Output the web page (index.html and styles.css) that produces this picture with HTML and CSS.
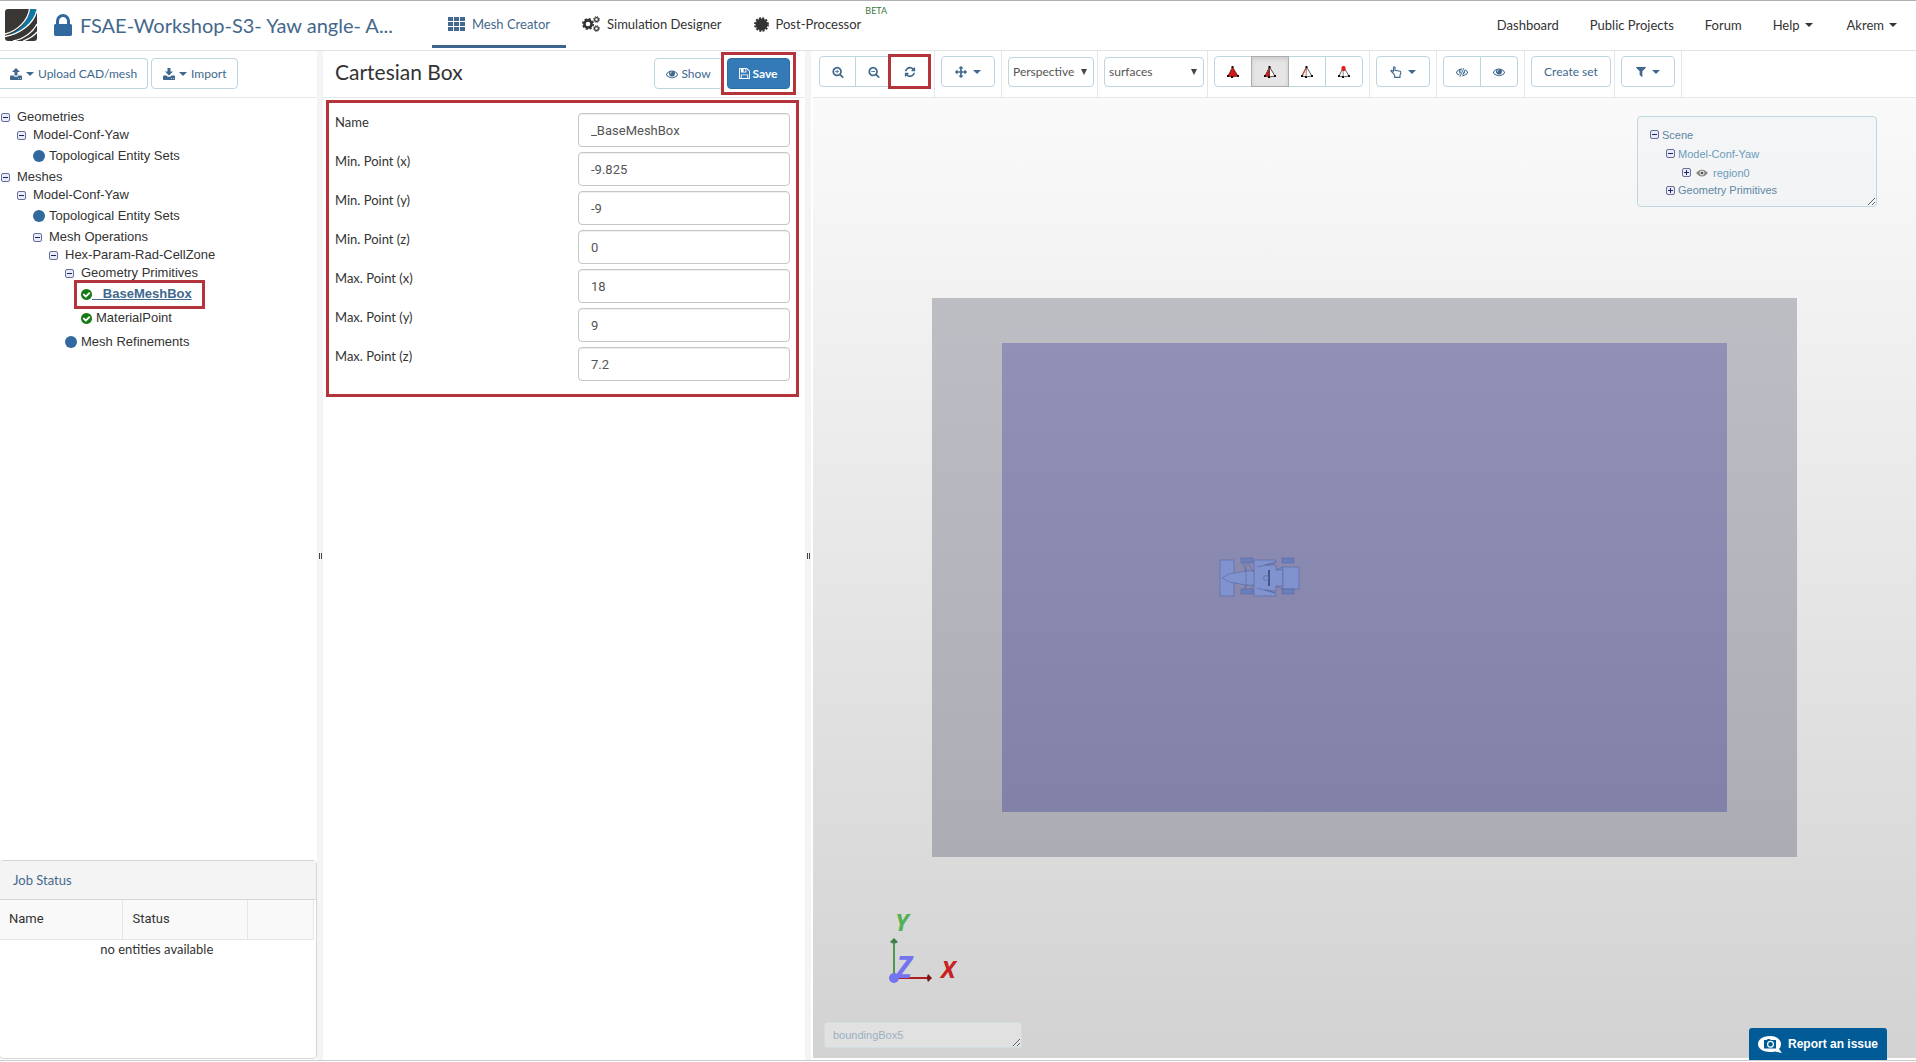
FILE: index.html
```html
<!DOCTYPE html>
<html lang="en">
<head>
<meta charset="utf-8">
<title>Mesh Creator</title>
<link rel="stylesheet" href="styles.css">
</head>
<body>
<svg class="defs" aria-hidden="true">
  <symbol id="i-lock" viewBox="320 128 1152 1408"><path d="M640 768h512v-192q0-106-75-181t-181-75-181 75-75 181v192zm832 96v576q0 40-28 68t-68 28h-960q-40 0-68-28t-28-68v-576q0-40 28-68t68-28h32v-192q0-184 132-316t316-132 316 132 132 316v192h32q40 0 68 28t28 68z"/></symbol>
  <symbol id="i-eye" viewBox="0 0 1792 1792"><path d="M1664 960q-152-236-381-353 61 104 61 225 0 185-131.5 316.5t-316.5 131.5-316.5-131.5-131.5-316.5q0-121 61-225-229 117-381 353 133 205 333.5 326.5t434.5 121.5 434.5-121.5 333.5-326.5zm-720-384q0-20-14-34t-34-14q-125 0-214.5 89.5t-89.5 214.5q0 20 14 34t34 14 34-14 14-34q0-86 61-147t147-61q20 0 34-14t14-34zm848 384q0 34-20 69-140 230-376.5 368.5t-499.5 138.5-499.5-139-376.5-368q-20-35-20-69t20-69q140-229 376.5-368t499.5-139 499.5 139 376.5 368q20 35 20 69z"/></symbol>
  <symbol id="i-zoom" viewBox="0 0 1792 1792"><path d="M1216 832q0-185-131.5-316.5t-316.5-131.5-316.5 131.5-131.5 316.5 131.5 316.5 316.5 131.5 316.5-131.5 131.5-316.5zm512 832q0 53-37.5 90.5t-90.5 37.5q-54 0-90-38l-343-342q-179 124-399 124-143 0-273.5-55.5t-225-150-150-225-55.5-273.5 55.5-273.5 150-225 225-150 273.5-55.5 273.5 55.5 225 150 150 225 55.5 273.5q0 220-124 399l343 343q37 37 37 90z"/></symbol>
  <symbol id="i-refresh" viewBox="0 0 1792 1792"><path d="M1639 1056q0 5-1 7-64 268-268 434.5t-478 166.5q-146 0-282.5-55t-243.5-157l-129 129q-19 19-45 19t-45-19-19-45v-448q0-26 19-45t45-19h448q26 0 45 19t19 45-19 45l-137 137q71 66 161 102t187 36q134 0 250-65t186-179q11-17 53-117 8-23 30-23h192q13 0 22.5 9.5t9.5 22.5zm25-800v448q0 26-19 45t-45 19h-448q-26 0-45-19t-19-45 19-45l138-138q-148-137-349-137-134 0-250 65t-186 179q-11 17-53 117-8 23-30 23h-199q-13 0-22.5-9.5t-9.5-22.5v-7q65-268 270-434.5t480-166.5q146 0 284 55.5t245 156.5l130-129q19-19 45-19t45 19 19 45z"/></symbol>
  <symbol id="i-move" viewBox="0 0 1792 1792"><path d="M1792 896q0 26-19 45l-256 256q-19 19-45 19t-45-19-19-45v-128h-384v384h128q26 0 45 19t19 45-19 45l-256 256q-19 19-45 19t-45-19l-256-256q-19-19-19-45t19-45 45-19h128v-384h-384v128q0 26-19 45t-45 19-45-19l-256-256q-19-19-19-45t19-45l256-256q19-19 45-19t45 19 19 45v128h384v-384h-128q-26 0-45-19t-19-45 19-45l256-256q19-19 45-19t45 19l256 256q19 19 19 45t-19 45-45 19h-128v384h384v-128q0-26 19-45t45-19 45 19l256 256q19 19 19 45z"/></symbol>
  <symbol id="i-filter" viewBox="192 256 1408 1408"><path d="M1595 295q17 41-14 70l-493 493v742q0 42-39 59-13 5-25 5-27 0-45-19l-256-256q-19-19-19-45v-486l-493-493q-31-29-14-70 17-39 59-39h1280q42 0 59 39z"/></symbol>
  <symbol id="i-check" viewBox="128 128 1536 1536"><path d="M1412 734q0-28-18-46l-91-90q-19-19-45-19t-45 19l-408 407-226-226q-19-19-45-19t-45 19l-91 90q-18 18-18 46 0 27 18 45l362 362q19 19 45 19 27 0 46-19l543-543q18-18 18-45zm252 162q0 209-103 385.5t-279.5 279.5-385.5 103-385.5-103-279.5-279.5-103-385.5 103-385.5 279.5-279.5 385.5-103 385.5 103 279.5 279.5 103 385.5z"/></symbol>
  <symbol id="i-floppy" viewBox="128 128 1536 1536"><path d="M512 1536h768v-384h-768v384zm896 0h128v-896q0-14-10-38.5t-20-34.5l-281-281q-10-10-34-20t-39-10v416q0 40-28 68t-68 28h-576q-40 0-68-28t-28-68v-416h-128v1280h128v-416q0-40 28-68t68-28h832q40 0 68 28t28 68v416zm-384-928v-320q0-13-9.5-22.5t-22.5-9.5h-192q-13 0-22.5 9.5t-9.5 22.5v320q0 13 9.5 22.5t22.5 9.5h192q13 0 22.5-9.5t9.5-22.5zm640 32v928q0 40-28 68t-68 28h-1344q-40 0-68-28t-28-68v-1344q0-40 28-68t68-28h928q40 0 88 20t76 48l280 280q28 28 48 76t20 88z"/></symbol>
  <symbol id="i-tray" viewBox="0 0 12 12"><path d="M.6 7.6H3.6L4.6 8.8H7.4L8.4 7.600H11.400L12 8.200V11.400L11.400 12H.6L0 11.400V8.200ZM8.300 10H9.100V10.800H8.300ZM10 10H10.800V10.800H10Z" fill-rule="evenodd"/></symbol>
  <symbol id="i-caret" viewBox="0 0 8 4"><path d="M0 0H8L4 4Z"/></symbol>
  <symbol id="i-minus" viewBox="0 0 9 9"><rect x=".5" y=".5" width="8" height="8" rx="1.500" fill="#e6ebf8" stroke="#6a6c99"/><path d="M2 4H7V5H2Z" fill="#222266"/></symbol>
  <symbol id="i-plus" viewBox="0 0 9 9"><rect x=".5" y=".5" width="8" height="8" rx="1.500" fill="#e6ebf8" stroke="#6a6c99"/><path d="M2 4H4V2H5V4H7V5H5V7H4V5H2Z" fill="#222266"/></symbol>
</svg>

<header class="topbar">
  <div class="brand">
    <svg class="logo" viewBox="0 0 32 32"><clipPath id="logo-clip"><rect width="32" height="32" rx="3"/></clipPath><g clip-path="url(#logo-clip)"><rect width="32" height="32" fill="#3a3633"/><path d="M0 27C14 24 23 13 25 0H32C30 14 17 25 0 27Z" fill="#0f76a8"/><g fill="none" stroke="#fff" stroke-width="1.300"><path d="M0 25C12 22 23 12 24.500 0"/><path d="M0 27.500C15 25 29 15 32 1"/><path d="M8 32C19 30 28 23 32 15"/><path d="M18 32C24 30 29 27 32 23"/></g></g></svg>
    <svg class="lock"><use href="#i-lock"/></svg>
    <a class="project" href="#">FSAE-Workshop-S3- Yaw angle- A...</a>
  </div>
  <nav class="tabs">
    <a class="tab active" href="#"><svg width="17" height="14" viewBox="0 0 17 14"><path d="M0 0h5v4H0zM6 0h5v4H6zM12 0h5v4h-5zM0 5h5v4H0zM6 5h5v4H6zM12 5h5v4h-5zM0 10h5v4H0zM6 10h5v4H6zM12 10h5v4h-5z"/></svg>Mesh Creator</a>
    <a class="tab" href="#"><svg width="18" height="16" viewBox="0 0 18 16"><g fill="none" stroke="currentColor"><circle cx="6" cy="8" r="3.600" stroke-width="2.600"/><circle cx="6" cy="8" r="5.200" stroke-width="1.600" stroke-dasharray="2.200 1.884"/><circle cx="14.500" cy="3.500" r="1.900" stroke-width="1.200"/><circle cx="14.500" cy="3.500" r="2.900" stroke-width="1" stroke-dasharray="1.200 1.077"/><circle cx="14.500" cy="12.500" r="1.900" stroke-width="1.200"/><circle cx="14.500" cy="12.500" r="2.900" stroke-width="1" stroke-dasharray="1.200 1.077"/></g></svg>Simulation Designer</a>
    <a class="tab" href="#"><svg width="15" height="15" viewBox="0 0 15 15"><circle cx="7.500" cy="7.500" r="5.900"/><circle cx="7.500" cy="7.500" r="6.400" fill="none" stroke="currentColor" stroke-width="2" stroke-dasharray="2 1.351"/></svg>Post-Processor<sup class="beta">BETA</sup></a>
  </nav>
  <nav class="usernav">
    <a href="#">Dashboard</a>
    <a href="#">Public Projects</a>
    <a href="#">Forum</a>
    <a href="#">Help <svg class="caret"><use href="#i-caret"/></svg></a>
    <a class="account" href="#">Akrem <svg class="caret"><use href="#i-caret"/></svg></a>
  </nav>
</header>

<main class="workspace">
  <aside class="side">
    <div class="panel-bar">
      <button class="btn flush" type="button"><svg class="ico12" viewBox="0 0 12 12"><use href="#i-tray"/><path d="M6 0L10 4H7.500V7.500H4.500V4H2Z"/></svg><svg class="caret"><use href="#i-caret"/></svg>Upload CAD/mesh</button>
      <button class="btn" type="button"><svg class="ico12" viewBox="0 0 12 12"><use href="#i-tray"/><path d="M6 7.500L10 3.500H7.500V0H4.500V3.500H2Z"/></svg><svg class="caret"><use href="#i-caret"/></svg>Import</button>
    </div>
    <ul class="tree">
      <li><div class="node"><svg class="tog"><use href="#i-minus"/></svg>Geometries</div>
        <ul>
          <li><div class="node"><svg class="tog"><use href="#i-minus"/></svg>Model-Conf-Yaw</div>
            <ul><li><div class="node leaf"><i class="dot"></i>Topological Entity Sets</div></li></ul>
          </li>
        </ul>
      </li>
      <li><div class="node"><svg class="tog"><use href="#i-minus"/></svg>Meshes</div>
        <ul>
          <li><div class="node"><svg class="tog"><use href="#i-minus"/></svg>Model-Conf-Yaw</div>
            <ul>
              <li><div class="node leaf"><i class="dot"></i>Topological Entity Sets</div></li>
              <li><div class="node"><svg class="tog"><use href="#i-minus"/></svg>Mesh Operations</div>
                <ul>
                  <li><div class="node"><svg class="tog"><use href="#i-minus"/></svg>Hex-Param-Rad-CellZone</div>
                    <ul>
                      <li><div class="node"><svg class="tog"><use href="#i-minus"/></svg>Geometry Primitives</div>
                        <ul>
                          <li><div class="node leaf"><span class="picked"><svg class="ok"><use href="#i-check"/></svg><a href="#">&nbsp;_BaseMeshBox</a></span></div></li>
                          <li><div class="node leaf"><svg class="ok"><use href="#i-check"/></svg>MaterialPoint</div></li>
                        </ul>
                      </li>
                      <li><div class="node leaf"><i class="dot"></i>Mesh Refinements</div></li>
                    </ul>
                  </li>
                </ul>
              </li>
            </ul>
          </li>
        </ul>
      </li>
    </ul>
    <section class="jobs">
      <h2><a href="#">Job Status</a></h2>
      <table>
        <thead><tr><th class="c-name">Name</th><th class="c-status">Status</th><th></th></tr></thead>
        <tbody><tr><td colspan="3">no entities available</td></tr></tbody>
      </table>
    </section>
  </aside>

  <div class="splitter"><span></span></div>

  <section class="editor">
    <div class="panel-bar editor-bar">
      <h1>Cartesian Box</h1>
      <button class="btn show" type="button"><svg class="ico12"><use href="#i-eye"/></svg>Show</button>
      <button class="btn primary marked" type="submit" form="box-form"><svg class="ico11"><use href="#i-floppy"/></svg>Save</button>
    </div>
    <form class="fields" id="box-form">
      <div class="field"><label for="f1">Name</label><input id="f1" type="text" value="_BaseMeshBox"></div>
      <div class="field"><label for="f2">Min. Point (x)</label><input id="f2" type="text" value="-9.825"></div>
      <div class="field"><label for="f3">Min. Point (y)</label><input id="f3" type="text" value="-9"></div>
      <div class="field"><label for="f4">Min. Point (z)</label><input id="f4" type="text" value="0"></div>
      <div class="field"><label for="f5">Max. Point (x)</label><input id="f5" type="text" value="18"></div>
      <div class="field"><label for="f6">Max. Point (y)</label><input id="f6" type="text" value="9"></div>
      <div class="field"><label for="f7">Max. Point (z)</label><input id="f7" type="text" value="7.2"></div>
    </form>
  </section>

  <div class="splitter"><span></span></div>

  <section class="viewer">
    <div class="tools">
      <div class="cell"><div class="group zooms">
        <button type="button" aria-label="Zoom in"><svg class="ico12" viewBox="0 0 1792 1792"><use href="#i-zoom"/><path d="M480 768h224v-224h128v224h224v128h-224v224h-128v-224h-224z"/></svg></button>
        <button type="button" aria-label="Zoom out"><svg class="ico12" viewBox="0 0 1792 1792"><use href="#i-zoom"/><path d="M480 768h576v128h-576z"/></svg></button>
        <button class="marked" type="button" aria-label="Reset view"><svg class="ico12"><use href="#i-refresh"/></svg></button>
      </div></div>
      <div class="cell"><button class="btn drop" type="button" aria-label="Move"><svg class="ico12"><use href="#i-move"/></svg><svg class="caret"><use href="#i-caret"/></svg></button></div>
      <div class="cell tight"><select class="projection" aria-label="Projection"><option>Perspective</option></select></div>
      <div class="cell tight"><select class="render" aria-label="Render mode"><option>surfaces</option></select></div>
      <div class="cell"><div class="group">
        <button type="button" aria-label="Pick volumes"><svg class="tri" viewBox="0 0 12 12"><path d="M5.500 1L11 10L5 11L1 10Z" fill="#d01818" stroke="#300" stroke-width=".6"/><path d="M4.500 0h2v2h-2zM0 9h2v2H0zM10 9h2v2h-2zM4 10h2v2H4z" fill="#200"/></svg></button>
        <button class="on" type="button" aria-label="Pick faces"><svg class="tri" viewBox="0 0 12 12"><path d="M5.500 1L11 10L5 11L1 10Z" fill="#fff" stroke="#222" stroke-width=".8"/><path d="M5.500 1L5.500 11L1 10Z" fill="#d01818"/><path d="M5.500 1V11" stroke="#222" stroke-width=".7"/><path d="M4.500 0h2v2h-2zM0 9h2v2H0zM10 9h2v2h-2zM4 10h2v2H4z" fill="#200"/></svg></button>
        <button type="button" aria-label="Pick edges"><svg class="tri" viewBox="0 0 12 12"><path d="M5.500 1L11 10L5 11L1 10Z" fill="#fff" stroke="#333" stroke-width=".8"/><path d="M5.500 1L1 10" stroke="#d05030" stroke-width="1.200"/><path d="M5.500 1L5 11" stroke="#555" stroke-width=".7"/><path d="M4.500 0h2v2h-2zM0 9h2v2H0zM10 9h2v2h-2zM4 10h2v2H4z" fill="#111"/></svg></button>
        <button type="button" aria-label="Pick vertices"><svg class="tri" viewBox="0 0 12 12"><path d="M5.500 1L11 10L5 11L1 10Z" fill="#fff" stroke="#333" stroke-width=".8"/><path d="M5.500 1L5 11" stroke="#555" stroke-width=".7"/><path d="M0 9h2v2H0zM10 9h2v2h-2zM4 10h2v2H4z" fill="#111"/><rect x="3.500" width="4" height="5" rx="1.500" fill="#e02020"/></svg></button>
      </div></div>
      <div class="cell"><button class="btn drop" type="button" aria-label="Selection"><svg class="ico12" viewBox="0 0 12 12"><path d="M3.500 7.500L1.300 5.500Q.5 4.400 1.700 4.200L3.500 5.200V1.400Q4.200.1 5 1.400V4.300L10.200 5.200Q11 5.600 10.800 7L10 9V11.400H4.700V9.500Z" fill="#fff" stroke="currentColor" stroke-width="1.100"/></svg><svg class="caret"><use href="#i-caret"/></svg></button></div>
      <div class="cell"><div class="group">
        <button type="button" aria-label="Hide"><svg class="ico12" viewBox="0 0 1792 1792"><use href="#i-eye"/><path d="M1190 340L690 1560" stroke="#fff" stroke-width="420"/><path d="M1180 300L580 1620M1330 620L960 1400" stroke="currentColor" stroke-width="130"/></svg></button>
        <button type="button" aria-label="Show all"><svg class="ico12"><use href="#i-eye"/></svg></button>
      </div></div>
      <div class="cell tight"><button class="btn create" type="button">Create set</button></div>
      <div class="cell"><button class="btn drop" type="button" aria-label="Filter"><svg class="ico10"><use href="#i-filter"/></svg><svg class="caret"><use href="#i-caret"/></svg></button></div>
    </div>
    <div class="canvas">
      <svg class="scene" viewBox="0 0 1103 960">
        <defs>
          <linearGradient id="outer" x2="0" y2="1"><stop stop-color="#bdbdc4"/><stop offset="1" stop-color="#acacb5"/></linearGradient>
          <linearGradient id="inner" x2="0" y2="1"><stop stop-color="#9191b8"/><stop offset="1" stop-color="#8282a9"/></linearGradient>
        </defs>
        <rect x="119" y="200" width="865" height="559" fill="url(#outer)"/>
        <rect x="189" y="245" width="725" height="469" fill="url(#inner)"/>
        <g fill="#8093cf" stroke="#56679f" stroke-width=".6">
          <rect x="407" y="462" width="14" height="36"/>
          <path d="M409 480L416 476L433 473L452 472V488L433 487L416 484Z"/>
          <path d="M441 462H463V464L452 467H463V472H470V488H463V493L452 492L463 495V498H441Z"/>
          <path d="M433 466V494M435 466L441 474M430 466L433 473M430 494L433 487M435 494L441 486M444 469L462 465M444 490L462 495M463 472L470 469M463 488L470 491" fill="none"/>
          <path d="M456 472V488" stroke="#333f75" stroke-width="1.500"/>
          <circle cx="453" cy="480" r="2.500"/>
          <rect x="470" y="469" width="16" height="22"/>
          <g fill="#6b7ebc"><rect x="428" y="460" width="12" height="5"/><rect x="428" y="491" width="12" height="5"/><rect x="469" y="460" width="12" height="5"/><rect x="469" y="491" width="12" height="5"/></g>
        </g>
      </svg>
      <div class="objects">
        <ul>
          <li class="s1 dark"><svg class="tog"><use href="#i-minus"/></svg>Scene</li>
          <li class="s2"><svg class="tog"><use href="#i-minus"/></svg>Model-Conf-Yaw</li>
          <li class="s3"><svg class="tog"><use href="#i-plus"/></svg><svg class="vis" viewBox="0 0 12 8"><path d="M0 4Q6-3 12 4Q6 11 0 4Z" fill="#85857d"/><circle cx="6" cy="4" r="2" fill="#555" stroke="#fff" stroke-width="1"/></svg>region0</li>
          <li class="s2 dark last"><svg class="tog"><use href="#i-plus"/></svg>Geometry Primitives</li>
        </ul>
      </div>
      <svg class="triad" viewBox="0 0 80 80">
        <path d="M13 67V28" stroke="#4c9a52" stroke-width="2"/><path d="M9 31L13 27L17 31Q13 34 9 31Z" fill="#3f7f45"/>
        <path d="M13 67H48" stroke="#b01c1c" stroke-width="2"/><path d="M47 63L51 67L47 71Q45 67 47 63Z" fill="#7c1414"/>
        <circle cx="13" cy="67" r="5" fill="#7474ee"/>
        <text class="ax-y" x="14" y="20">Y</text><text class="ax-z" x="15" y="67">Z</text><text class="ax-x" x="60" y="67">X</text>
      </svg>
      <textarea class="selection" aria-label="Selected objects">boundingBox5</textarea>
    </div>
  </section>
</main>
<button class="report" type="button"><svg viewBox="0 0 24 17"><path d="M12 0C19 0 23 4 23 8Q23 11 21 13L24 17L17 15.500Q15 16 12 16C4 16 0 12 0 8S4 0 12 0Z" fill="#fff"/><path d="M6 4H9L9.500 3H12L12.500 4H18V12.500H6Z" fill="#005b96"/><circle cx="12.500" cy="8.200" r="2.900" fill="#005b96" stroke="#fff" stroke-width="1.200"/></svg>Report an issue</button>
</body>
</html>
```
FILE: styles.css
```css
* { box-sizing: border-box; }

body {
  margin: 0;
  height: 100vh;
  display: flex;
  flex-direction: column;
  border-top: 1px solid #b0b0b0;
  background: #fff;
  color: #333;
  font: 13px/18px Lato, sans-serif;
  overflow: hidden;
}

a { color: inherit; text-decoration: none; }
ul { list-style: none; margin: 0; padding: 0; }
button, select { font: inherit; cursor: pointer; }
svg { fill: currentColor; flex: none; }

.defs { position: absolute; width: 0; height: 0; }
.caret { width: 8px; height: 4px; }
.ico10 { width: 10px; height: 10px; }
.ico11 { width: 11px; height: 11px; }
.ico12 { width: 12px; height: 12px; }
.tog { width: 9px; height: 9px; }

/* red highlight frame drawn over a control */
.marked { position: relative; }
.marked::after {
  content: "";
  position: absolute;
  inset: -7px;
  border: 3px solid #b5343b;
}

/* top bar */
.topbar {
  display: flex;
  flex: none;
  height: 50px;
  border-bottom: 1px solid #e2e2e2;
}
.brand { display: flex; align-items: center; width: 432px; padding: 0 0 1px 5px; }
.logo { width: 32px; height: 32px; margin-right: 17px; }
.lock { width: 18px; height: 22px; margin-right: 8px; color: #31689d; }
.project { font-size: 20px; line-height: 24px; color: #44688c; white-space: nowrap; }
.tabs { display: flex; font-size: 13px; }
.tab {
  position: relative;
  display: flex;
  align-items: center;
  gap: 7px;
  height: 47px;
  padding: 2px 16px 0;
  border-bottom: 3px solid transparent;
}
.tab.active { color: #44688c; border-color: #3c648d; }
.beta { position: absolute; left: 100%; top: 3px; margin-left: -12px; font-size: 9px; line-height: 14px; color: #3c763d; }
.usernav { display: flex; align-items: center; gap: 31px; margin-left: auto; padding: 0 19px 2px 0; font-size: 13px; }
.usernav a { display: flex; align-items: center; gap: 5px; }
.usernav .account { margin-left: 3px; }

/* three columns */
.workspace {
  flex: 1;
  min-height: 0;
  display: grid;
  grid-template-columns: 317px 6px 482px 6px 1fr;
  margin-bottom: 1px;
  border-bottom: 1px solid #ccc;
}
.splitter { display: flex; align-items: center; justify-content: center; background: #f4f4f4; }
.splitter span { width: 3px; height: 6px; border: solid #444; border-width: 0 1px; }
.panel-bar { display: flex; align-items: center; gap: 3px; height: 47px; padding-bottom: 1px; border-bottom: 1px solid #e8e8e8; }

.btn {
  display: inline-flex;
  align-items: center;
  justify-content: center;
  gap: 4px;
  height: 31px;
  padding: 0 11px;
  border: 1px solid #bcd5e0;
  border-radius: 4px;
  background: #fff;
  color: #40688e;
  font-size: 12px;
  white-space: nowrap;
}
.btn.flush { border-left: 0; border-radius: 0 4px 4px 0; padding: 0 10px; }

/* left column */
.side { display: flex; flex-direction: column; min-height: 0; }
.tree { padding: 10px 0 0 1px; font: 13px/18px "Liberation Sans", sans-serif; flex: 1; min-height: 0; overflow: hidden; }
.tree ul { padding-left: 16px; }
.node { display: flex; align-items: center; gap: 7px; height: 18px; white-space: nowrap; }
.node.leaf { height: 24px; gap: 4px; }
.dot { width: 12px; height: 12px; border-radius: 50%; background: #31689d; }
.ok { width: 11px; height: 11px; color: #147a14; }
.picked {
  display: flex;
  align-items: center;
  height: 29px;
  margin-left: -7px;
  padding: 0 10px 0 4px;
  border: 3px solid #b5343b;
}
.picked a { color: #40688e; font-weight: bold; text-decoration: underline; }

.jobs { height: 199px; margin: 0 0 1px -1px; border: 1px solid #d6d6d6; border-radius: 4px; }
.jobs h2 { margin: 0; height: 39px; padding-left: 13px; border-bottom: 1px solid #d6d6d6; background: #f4f4f4; font-size: 13px; font-weight: normal; line-height: 38px; color: #44688c; }
.jobs table { width: 314px; border-collapse: collapse; table-layout: fixed; }
.jobs th { height: 39px; padding: 0 10px; border: 1px solid #e6e6e6; border-width: 0 1px 1px 0; background: #faf9fa; text-align: left; font: 13px/18px Roboto, sans-serif; color: #333; }
.jobs th:first-child { padding-left: 9px; }
.c-name { width: 122px; }
.c-status { width: 125px; }
.jobs td { padding: 0; text-align: center; }

/* middle column */
.editor-bar { gap: 4px; padding-left: 12px; padding-right: 15px; }
.editor-bar h1 { flex: 1; margin: 0; padding-bottom: 4px; font-size: 21px; font-weight: normal; line-height: 28px; }
.btn.show { width: 69px; padding: 0; gap: 3px; }
.btn.primary { width: 63px; gap: 2px; padding: 0; border-color: #2e6da4; background: #337ab7; color: #fff; font-weight: bold; }
.fields {
  display: flex;
  flex-direction: column;
  gap: 5px;
  margin: 2px 6px 0 3px;
  padding: 10px 6px 13px;
  border: 3px solid #b5343b;
}
.field { display: flex; justify-content: space-between; align-items: flex-start; }
.field label { font-size: 13px; line-height: 18px; }
.field input {
  width: 212px;
  height: 34px;
  padding: 0 12px;
  border: 1px solid #c6c6c6;
  border-radius: 4px;
  box-shadow: inset 0 1px 1px rgba(0, 0, 0, .07);
  font: 13px/18px Roboto, sans-serif;
  color: #555;
}

/* 3D view */
.viewer { display: flex; flex-direction: column; min-width: 0; padding: 0 0 2px 2px; }
.tools { display: flex; height: 47px; border-bottom: 1px solid #e6e6e6; }
.cell { padding: 5px 6px 0; border-right: 1px solid #e6e6e6; }
.cell.tight { padding-right: 3px; }
.group { display: flex; }
.group button {
  width: 38px;
  height: 31px;
  padding: 0;
  display: flex;
  align-items: center;
  justify-content: center;
  border: 1px solid #bcd5e0;
  background: #fff;
  color: #40688e;
}
.zooms button { width: 37px; }
.group button + button { margin-left: -1px; }
.group button:first-child { border-radius: 4px 0 0 4px; }
.group button:last-child { border-radius: 0 4px 4px 0; }
.group .on { background: #e5e5e5; border-color: #adadad; box-shadow: inset 0 2px 4px rgba(0, 0, 0, .12); z-index: 1; }
.group .marked { border-color: transparent; }
.group .marked::after { inset: -3px -4px; }
.tri { width: 12px; height: 12px; }
.drop { width: 54px; padding: 0; gap: 6px; }
.create { width: 80px; padding: 0; }
.tools select {
  height: 30px;
  margin-top: 1px;
  padding: 0 4px;
  border: 1px solid #bcd5e0;
  border-radius: 4px;
  appearance: none;
  background: #fff url("data:image/svg+xml,%3Csvg xmlns='http://www.w3.org/2000/svg' width='6' height='6'%3E%3Cpath d='M0 0H6L3 6Z' fill='%23444'/%3E%3C/svg%3E") no-repeat right 6px center;
  color: #555;
  font-size: 12px;
}
.projection { width: 86px; }
.render { width: 100px; }

.canvas { position: relative; flex: 1; min-height: 0; background: linear-gradient(#fafafa, #d2d2d2); }
.scene { display: block; width: 100%; height: 100%; }
.objects {
  position: absolute;
  top: 18px;
  right: 39px;
  width: 240px;
  height: 91px;
  padding: 8px 12px;
  overflow: hidden;
  resize: both;
  border: 1px solid #bcd8e0;
  border-radius: 4px;
  background: rgba(240, 242, 243, .5);
  color: #6b9cba;
  font: 11px/16px "Liberation Sans", sans-serif;
}
.objects li { display: flex; align-items: center; gap: 3px; height: 19px; }
.objects .last { height: 16px; }
.objects .dark { color: #5d87a5; }
.s2 { padding-left: 16px; }
.s3 { padding-left: 32px; }
.vis { width: 12px; height: 8px; margin: 0 2px; }

.triad { position: absolute; left: 68px; bottom: 67px; width: 80px; height: 80px; overflow: visible; }
.triad text { font: italic bold 24px "Open Sans", sans-serif; }
.triad .ax-y { fill: #52b152; }
.triad .ax-x { fill: #c82222; }
.triad .ax-z { fill: #7474ee; font-size: 30px; }

.selection {
  position: absolute;
  left: 11px;
  bottom: 10px;
  width: 198px;
  height: 26px;
  padding: 4px 8px;
  border: 1px solid #d2dde1;
  border-radius: 3px;
  background: #e1e1e1;
  color: #9bb0bf;
  font: 11px/16px "Liberation Sans", sans-serif;
}

.report {
  position: absolute;
  right: 29px;
  bottom: 2px;
  display: flex;
  align-items: center;
  gap: 6px;
  height: 32px;
  padding: 0 9px;
  border: 0;
  border-radius: 3px 3px 0 0;
  background: #005b96;
  color: #fff;
  font: bold 12px/16px "Liberation Sans", sans-serif;
}
.report svg { width: 24px; height: 17px; }
```
